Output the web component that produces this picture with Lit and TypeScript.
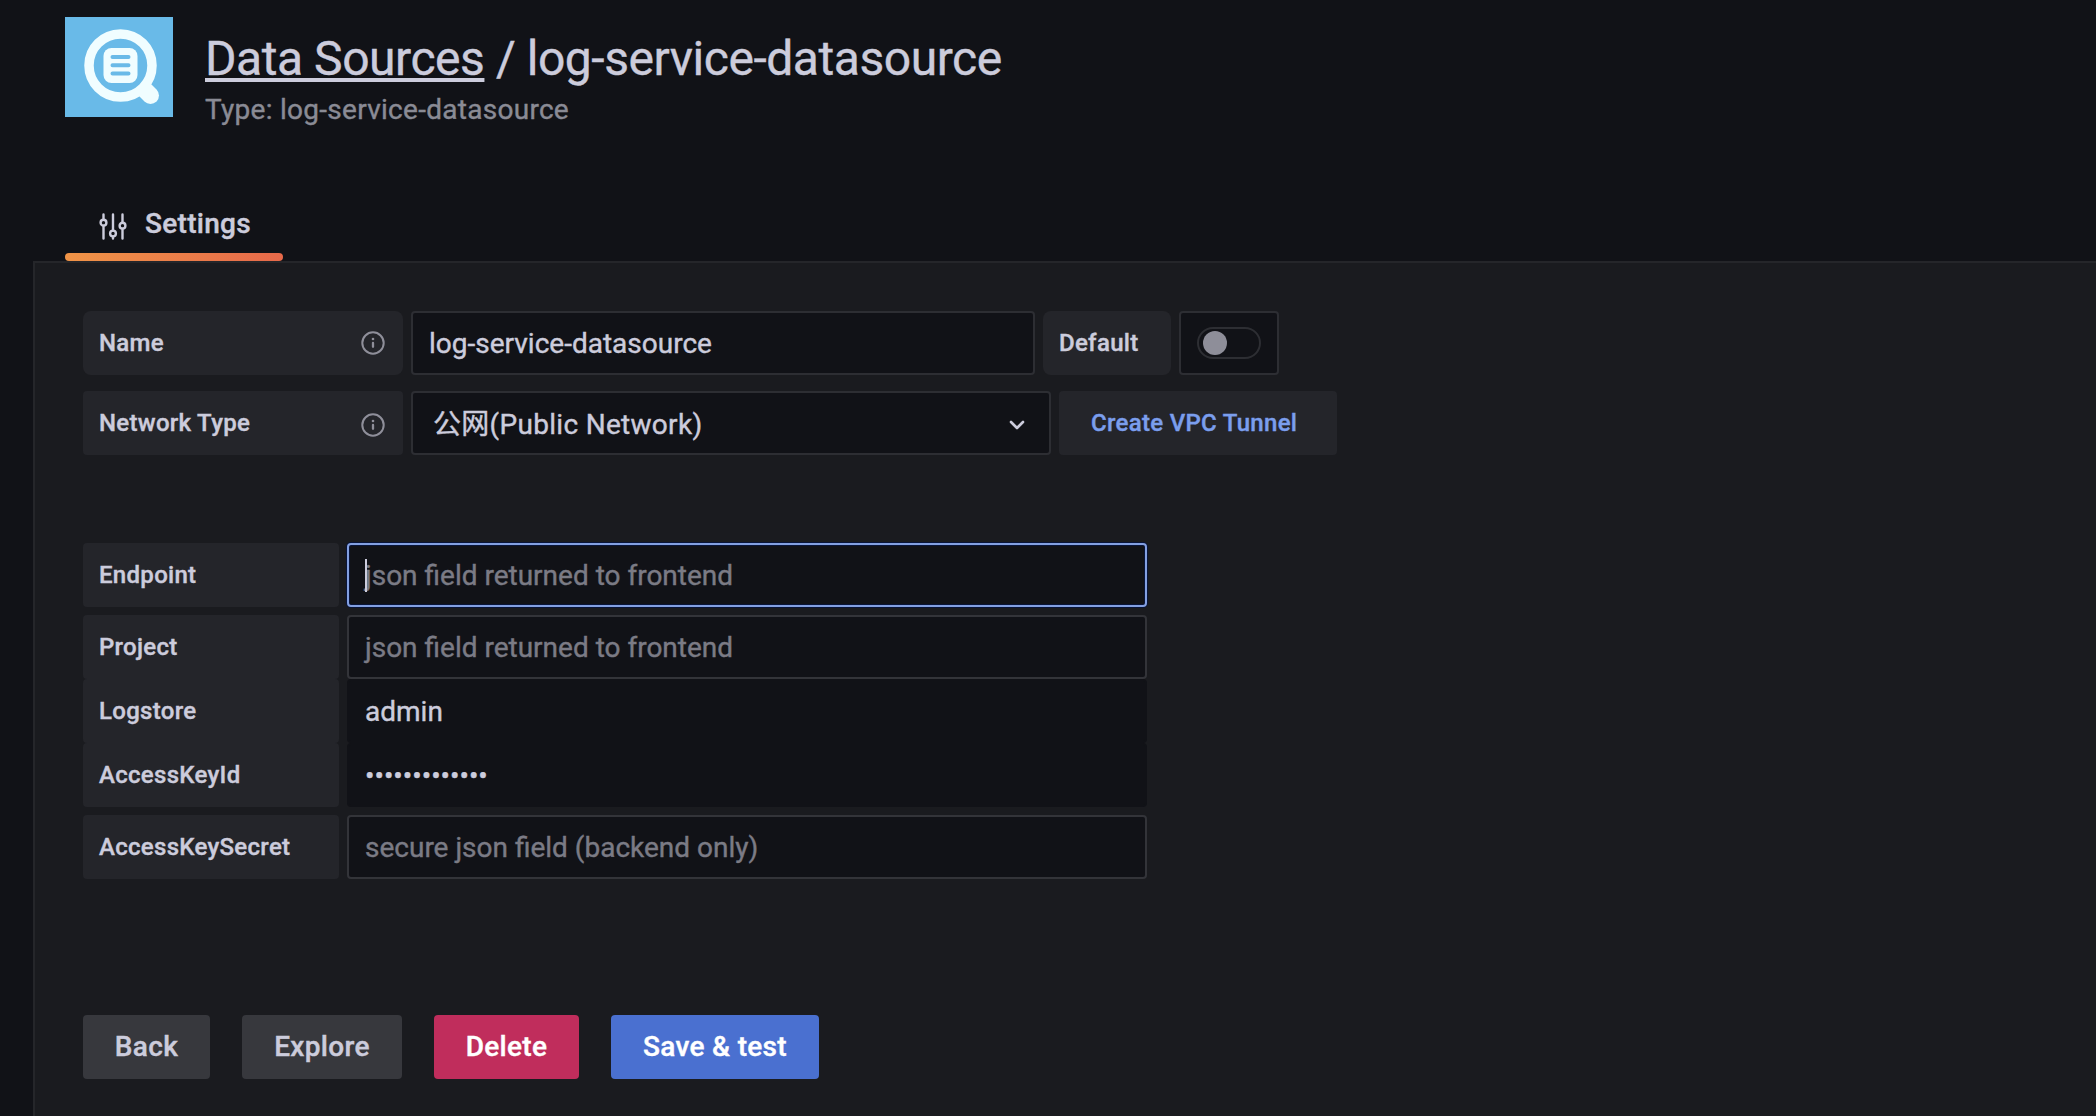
import { LitElement, html, css, nothing } from "lit";
import { customElement, property } from "lit/decorators.js";

const infoIcon = html`<svg class="info" viewBox="0 0 24 24" width="24" height="24" aria-hidden="true">
  <circle cx="12" cy="12" r="10.7" fill="none" stroke="currentColor" stroke-width="2"></circle>
  <circle cx="12" cy="8" r="1.3" fill="currentColor"></circle>
  <path d="M12 12v3.8" stroke="currentColor" stroke-width="2.3" stroke-linecap="round"></path>
</svg>`;

@customElement("form-row")
class FormRow extends LitElement {
  @property() label = "";
  @property() value = "";
  @property() hint = "";
  @property({ type: Boolean }) focused = false;
  @property({ type: Boolean }) autofilled = false;

  static styles = css`
    :host {
      display: flex;
      gap: 8px;
      height: 64px;
    }
    .label {
      box-sizing: border-box;
      width: 256px;
      padding: 0 16px;
      border-radius: 4px;
      background: #24252a;
      color: #ccccdc;
      font-size: 24px;
      font-weight: 500;
      line-height: 64px;
      letter-spacing: 0.3px;
    }
    .field {
      box-sizing: border-box;
      display: flex;
      align-items: center;
      width: 800px;
      padding: 0 16px;
      border: 2px solid #333439;
      border-radius: 4px;
      background: #111217;
      color: #ccccdc;
      font-size: 28px;
    }
    .focused {
      border-color: #83a0e2;
      box-shadow: 0 0 0 1px #09153a, inset 0 0 0 1px #09153a;
    }
    .autofilled {
      border-color: #111217;
    }
    .hint {
      color: #7b7b85;
    }
    .caret {
      width: 2px;
      height: 33px;
      margin-right: -2px;
      background: #ccccdc;
      z-index: 1;
    }
  `;

  render() {
    const state = this.focused ? "focused" : this.autofilled ? "autofilled" : "";
    return html`
      <div class="label">${this.label}</div>
      <div class="field ${state}">
        ${this.focused ? html`<span class="caret"></span>` : nothing}
        ${this.value ? html`<span>${this.value}</span>` : html`<span class="hint">${this.hint}</span>`}
      </div>
    `;
  }
}

@customElement("app-root")
class AppRoot extends LitElement {
  static styles = css`
    :host {
      display: flex;
      flex-direction: column;
      box-sizing: border-box;
      width: 100%;
      height: 1116px;
      overflow: hidden;
      background: #111217;
      color: #ccccdc;
      font-family: Roboto, "Noto Sans CJK SC", sans-serif;
      font-size: 28px;
      -webkit-text-stroke: 0.4px currentColor;
    }
    .header {
      display: flex;
      gap: 32px;
      height: 181px;
      padding: 17px 0 0 65px;
      flex: none;
    }
    .logo {
      width: 108px;
      height: 100px;
      display: block;
    }
    .title {
      margin: 14px 0 0;
      font-size: 48px;
      font-weight: 400;
      line-height: 56px;
      letter-spacing: -0.45px;
      white-space: pre;
    }
    .crumb {
      text-decoration: underline;
      text-decoration-thickness: 4px;
      text-underline-offset: 3px;
      text-decoration-skip-ink: none;
    }
    .type {
      margin-top: 5px;
      color: #8a8b95;
      line-height: 36px;
      letter-spacing: 0.28px;
    }
    .tabs {
      display: flex;
      height: 63px;
      padding-left: 65px;
      flex: none;
    }
    .tab {
      display: flex;
      flex-direction: column;
      justify-content: flex-end;
      width: 218px;
    }
    .tab-body {
      display: flex;
      align-items: center;
      gap: 18px;
      height: 46px;
      padding: 0 0 7px 34px;
      font-weight: 500;
      letter-spacing: 0.3px;
    }
    .tab-icon {
      margin-top: 5px;
    }
    .bar {
      height: 8px;
      border-radius: 4px;
      background: linear-gradient(90deg, #f09447, #e7694a);
    }
    .panel {
      flex: 1;
      margin-left: 33px;
      padding: 48px 0 0 48px;
      border: 2px solid #25262a;
      border-width: 2px 0 0 2px;
      background: #1a1b1f;
    }
    .row {
      display: flex;
      gap: 8px;
      height: 64px;
      margin-bottom: 16px;
    }
    .label {
      box-sizing: border-box;
      display: flex;
      align-items: center;
      justify-content: space-between;
      padding: 0 18px 0 16px;
      border-radius: 4px;
      background: #24252a;
      font-size: 24px;
      font-weight: 500;
      letter-spacing: 0.3px;
      white-space: nowrap;
    }
    .round {
      border-radius: 8px;
    }
    .wide {
      width: 320px;
    }
    .default {
      width: 128px;
    }
    .link {
      width: 278px;
      padding: 0 32px;
      color: #7b9eed;
    }
    .info {
      color: #8f8f9a;
    }
    .low {
      padding-top: 4px;
      display: flex;
    }
    .box {
      box-sizing: border-box;
      display: flex;
      align-items: center;
      justify-content: space-between;
      border: 2px solid #2d2e33;
      border-radius: 4px;
      background: #111217;
    }
    .name {
      width: 624px;
      padding: 0 16px;
    }
    .select {
      width: 640px;
      padding: 0 24px 0 20px;
      letter-spacing: 0.3px;
    }
    .select-text {
      padding-bottom: 2px;
    }
    .chevron {
      margin-top: 3px;
    }
    .switch {
      width: 100px;
      padding: 0 16px;
    }
    .track {
      box-sizing: border-box;
      display: flex;
      align-items: center;
      width: 64px;
      height: 32px;
      padding-left: 4px;
      border: 2px solid #2d2e33;
      border-radius: 16px;
    }
    .knob {
      width: 24px;
      height: 24px;
      border-radius: 50%;
      background: #8e8e99;
    }
    .rows {
      display: flex;
      flex-direction: column;
      margin-top: 88px;
    }
    .gap {
      margin-top: 8px;
    }
    .actions {
      display: flex;
      gap: 32px;
      margin-top: 136px;
    }
    .btn {
      height: 64px;
      padding: 0;
      border: 0;
      border-radius: 4px;
      background: #37383d;
      color: #ccccdc;
      font: 500 28px/64px Roboto, sans-serif;
      letter-spacing: 0.32px;
    }
    .back { width: 127px; }
    .explore { width: 160px; }
    .delete { width: 145px; background: #c02d5c; color: #fff; }
    .save { width: 208px; background: #4a70d0; color: #fff; }
  `;

  render() {
    return html`
      <header class="header">
        <svg class="logo" viewBox="0 0 108 100" aria-hidden="true">
          <rect width="108" height="100" fill="#69bae8"></rect>
          <g fill="none" stroke="#f0fdff">
            <circle cx="55.5" cy="48.5" r="31.5" stroke-width="9.5"></circle>
            <path d="M81 74l4.500 4.500" stroke-width="17" stroke-linecap="round"></path>
          </g>
          <rect x="38.500" y="31" width="34" height="35" rx="8" fill="#f0fdff"></rect>
          <path d="M47.500 40h16M47.500 48.200h16M47.500 56.500h16" stroke="#69bae8" stroke-width="4" stroke-linecap="round"></path>
        </svg>
        <div>
          <h1 class="title"><span class="crumb">Data Sources</span> / log-service-datasource</h1>
          <div class="type">Type: log-service-datasource</div>
        </div>
      </header>
      <nav class="tabs">
        <div class="tab">
          <div class="tab-body">
            <svg class="tab-icon" viewBox="0 0 28 28" width="28" height="28" fill="none" stroke="currentColor" stroke-width="2.4" stroke-linecap="round" aria-hidden="true">
              <path d="M4.500 2.500v5M4.500 13.700V26.500M14 2.500v16M14 24.700v1.800M23.500 2.500v8M23.500 16.700v9.800"></path>
              <circle cx="4.500" cy="10.700" r="2.900"></circle>
              <circle cx="14" cy="21.500" r="2.900"></circle>
              <circle cx="23.500" cy="13.700" r="2.900"></circle>
            </svg>
            <span>Settings</span>
          </div>
          <div class="bar"></div>
        </div>
      </nav>
      <main class="panel">
        <div class="row">
          <div class="label wide round"><span>Name</span>${infoIcon}</div>
          <div class="box name">log-service-datasource</div>
          <div class="label default round">Default</div>
          <div class="box switch"><div class="track"><div class="knob"></div></div></div>
        </div>
        <div class="row">
          <div class="label wide"><span>Network Type</span><span class="low">${infoIcon}</span></div>
          <div class="box select">
            <span class="select-text">公网(Public Network)</span>
            <svg class="chevron" viewBox="0 0 16 10" width="16" height="10" aria-hidden="true">
              <path d="M2 2l6 6 6-6" fill="none" stroke="currentColor" stroke-width="2.600" stroke-linecap="round" stroke-linejoin="round"></path>
            </svg>
          </div>
          <div class="label link">Create VPC Tunnel</div>
        </div>
        <div class="rows">
          <form-row label="Endpoint" hint="json field returned to frontend" focused></form-row>
          <form-row class="gap" label="Project" hint="json field returned to frontend"></form-row>
          <form-row label="Logstore" value="admin" autofilled></form-row>
          <form-row label="AccessKeyId" value="•••••••••••••" autofilled></form-row>
          <form-row class="gap" label="AccessKeySecret" hint="secure json field (backend only)"></form-row>
        </div>
        <div class="actions">
          <button class="btn back">Back</button>
          <button class="btn explore">Explore</button>
          <button class="btn delete">Delete</button>
          <button class="btn save">Save &amp; test</button>
        </div>
      </main>
    `;
  }
}
